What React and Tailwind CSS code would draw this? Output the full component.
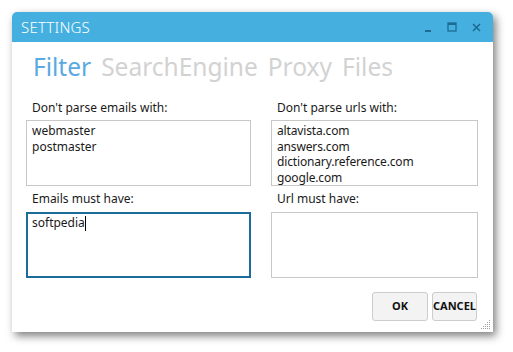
import React from "react";

export default function App() {
  const font = { fontFamily: '"Noto Sans", "Open Sans", sans-serif' };
  return (
    <div className="w-[513px] h-[352px] bg-white pl-[12px] pt-[12px] overflow-hidden" style={font}>
      <div className="w-[481px] h-[320px] bg-white rounded-t-[5px] shadow-[3px_4px_9px_rgba(0,0,0,0.5)] flex flex-col relative">
        {/* Title bar */}
        <div className="h-[30px] bg-[#45b0df] rounded-t-[5px] flex items-center pl-[9px] pr-[12px]">
          <span className="text-white text-[15px] font-light tracking-[0.2px] leading-none">SETTINGS</span>
          <div className="ml-auto flex items-center gap-[15px] text-[#1d6a95]">
            <svg width="8" height="10" viewBox="0 0 8 10"><rect x="1" y="8" width="6" height="2" fill="currentColor" /></svg>
            <svg width="10" height="10" viewBox="0 0 10 10"><rect x="1" y="1" width="8" height="8" fill="none" stroke="currentColor" strokeWidth="1.3" /><rect x="1" y="1" width="8" height="2" fill="currentColor" /></svg>
            <svg width="9" height="9" viewBox="0 0 9 9"><path d="M1 1 L8 8 M8 1 L1 8" stroke="currentColor" strokeWidth="1.6" /></svg>
          </div>
        </div>
        {/* Tabs */}
        <div className="flex items-baseline gap-[10px] pl-[21px] pt-[8px] h-[58px] text-[24.5px] font-normal leading-[34px]">
          <span className="text-[#5aa9e0]">Filter</span>
          <span className="text-[#d2d2d2]">SearchEngine</span>
          <span className="text-[#d2d2d2]">Proxy</span>
          <span className="text-[#d2d2d2]">Files</span>
        </div>
        {/* Grid */}
        <div className="grid grid-cols-[225px_207px] gap-x-[20px] pl-[14px] text-[12px] text-[#1a1a1a]">
          <div className="pl-[6px] h-[20px] leading-[16px]">Don't parse emails with:</div>
          <div className="pl-[6px] h-[20px] leading-[16px]">Don't parse urls with:</div>
          <div className="h-[66px] border border-[#c8c8c8] pl-[5px] pt-[2px] leading-[15.7px] overflow-hidden">
            <div>webmaster</div>
            <div>postmaster</div>
          </div>
          <div className="h-[66px] border border-[#c8c8c8] pl-[5px] pt-[2px] leading-[15.7px] overflow-hidden tracking-[-0.15px]">
            <div>altavista.com</div>
            <div>answers.com</div>
            <div>dictionary.reference.com</div>
            <div>google.com</div>
          </div>
          <div className="pl-[6px] h-[26px] leading-[16px] pt-[5px]">Emails must have:</div>
          <div className="pl-[6px] h-[26px] leading-[16px] pt-[5px]">Url must have:</div>
          <div className="h-[66px] border-2 border-[#1b6c9a] pl-[4px] pt-[1px] leading-[15.7px] flex items-start">
            <span>softpedia</span>
            <span className="inline-block w-[1px] h-[15px] bg-black mt-[1px]" />
          </div>
          <div className="h-[66px] border border-[#c8c8c8]" />
        </div>
        {/* Buttons */}
        <div className="flex justify-end gap-[4px] pr-[16px] mt-[14px]">
          <button className="w-[56px] h-[29px] bg-[#f3f3f3] border border-[#cccccc] rounded-[3px] text-[11px] font-bold text-[#111]">OK</button>
          <button className="w-[45px] h-[29px] bg-[#f3f3f3] border border-[#cccccc] rounded-[3px] text-[11px] font-bold text-[#111]">CANCEL</button>
        </div>
        {/* Resize grip */}
        <svg className="absolute right-[2px] bottom-[2px]" width="12" height="12" viewBox="0 0 12 12">
          {[[10,2],[8,4],[10,4],[6,6],[8,6],[10,6],[4,8],[6,8],[8,8],[10,8],[2,10],[4,10],[6,10],[8,10],[10,10]].map(([x,y],i)=>(
            <rect key={i} x={x} y={y} width="1" height="1" fill="#a0a0a0" />
          ))}
        </svg>
      </div>
    </div>
  );
}
